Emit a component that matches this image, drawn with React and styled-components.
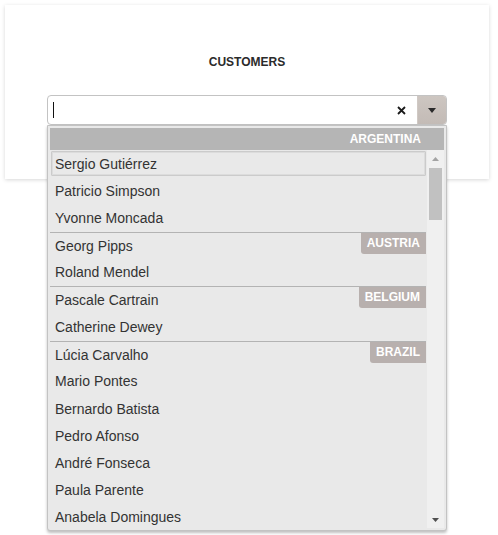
import styled, { createGlobalStyle } from "styled-components";

const GlobalStyle = createGlobalStyle`
  html, body {
    margin: 0;
    padding: 0;
    background: #ffffff;
    height: 100%;
  }
  #root {
    min-height: 100%;
  }
  body {
    font-family: "Liberation Sans", Arial, sans-serif;
    color: #333333;
  }
`;

const Page = styled.div`
  min-height: 535px;
  box-sizing: border-box;
  padding: 5px 9px 0 5px;
`;

const Card = styled.div`
  position: relative;
  z-index: 0;
  width: 484px;
  box-sizing: border-box;
  padding: 47px 42px 54px 42px;
  background: #ffffff;
  box-shadow: 0 1px 4px rgba(0, 0, 0, 0.16);
  display: flex;
  flex-direction: column;
  align-items: center;
`;

const Title = styled.div`
  font-size: 12px;
  font-weight: bold;
  line-height: 20px;
  color: #2b2b2b;
  margin-bottom: 23px;
`;

const Combo = styled.div`
  position: relative;
  width: 400px;
`;

const InputBox = styled.div`
  height: 30px;
  box-sizing: border-box;
  border: 1px solid #c3c3c3;
  border-radius: 4px;
  background: #ffffff;
  display: flex;
  align-items: stretch;
  overflow: hidden;
`;

const Field = styled.div`
  flex: 1;
  display: flex;
  align-items: center;
  padding-left: 5px;
`;

const Caret = styled.span`
  width: 1px;
  height: 16px;
  background: #111111;
`;

const Clear = styled.div`
  width: 24px;
  display: flex;
  align-items: center;
  justify-content: center;
  margin-right: 4px;
`;

const ToggleButton = styled.div`
  width: 28px;
  background: linear-gradient(#cdc6c1, #c3bbb6);
  border-left: 1px solid #d0c9c4;
  display: flex;
  align-items: center;
  justify-content: center;
`;

const Popup = styled.div`
  position: absolute;
  z-index: 10;
  top: 100%;
  left: 0;
  width: 400px;
  box-sizing: border-box;
  padding: 2px;
  border: 1px solid #c3c3c3;
  border-radius: 0 0 3px 3px;
  background: #e9e9e9;
  box-shadow: 0 2px 3px rgba(0, 0, 0, 0.25);
  display: flex;
  flex-direction: column;
`;

const Header = styled.div`
  height: 22px;
  line-height: 22px;
  background: #b5b5b5;
  color: #ffffff;
  font-size: 12px;
  font-weight: bold;
  text-align: right;
  padding-right: 23px;
`;

const Body = styled.div`
  height: 378px;
  flex-shrink: 0;
  display: flex;
`;

const List = styled.ul`
  flex: 1;
  margin: 0;
  padding: 0;
  list-style: none;
  overflow: hidden;
`;

const Item = styled.li`
  position: relative;
  height: 27.23px;
  box-sizing: border-box;
  padding-left: 5px;
  display: flex;
  align-items: center;
  font-size: 14px;
  color: #333333;
  border-top: ${(p) => (p.$group ? "1px solid #b3b3b3" : "none")};
  margin-right: 1px;
  &::after {
    content: "";
    display: ${(p) => (p.$focused ? "block" : "none")};
    position: absolute;
    left: 1px;
    right: 0;
    top: 1px;
    bottom: 1px;
    border: 1px solid #cbcbcb;
    box-shadow: inset 0 0 0 1px #dcdcdc;
    border-radius: 1px;
  }
`;

const GroupLabel = styled.span`
  position: absolute;
  top: 0;
  right: 0;
  height: 21px;
  line-height: 21px;
  padding: 0 6px;
  background: #b8b0ae;
  color: #ffffff;
  font-size: 12px;
  font-weight: bold;
  border-bottom-left-radius: 3px;
`;

const Scrollbar = styled.div`
  width: 17px;
  background: #f0f0f0;
  display: flex;
  flex-direction: column;
`;

const Arrow = styled.div`
  height: 17px;
  display: flex;
  align-items: center;
  justify-content: center;
`;

const Track = styled.div`
  flex: 1;
  padding: 1px 2px;
`;

const Thumb = styled.div`
  height: 52px;
  background: #c1c1c1;
`;

const customers = [
  { name: "Sergio Gutiérrez", country: "Argentina" },
  { name: "Patricio Simpson", country: "Argentina" },
  { name: "Yvonne Moncada", country: "Argentina" },
  { name: "Georg Pipps", country: "Austria" },
  { name: "Roland Mendel", country: "Austria" },
  { name: "Pascale Cartrain", country: "Belgium" },
  { name: "Catherine Dewey", country: "Belgium" },
  { name: "Lúcia Carvalho", country: "Brazil" },
  { name: "Mario Pontes", country: "Brazil" },
  { name: "Bernardo Batista", country: "Brazil" },
  { name: "Pedro Afonso", country: "Brazil" },
  { name: "André Fonseca", country: "Brazil" },
  { name: "Paula Parente", country: "Brazil" },
  { name: "Anabela Domingues", country: "Brazil" },
];

const Triangle = ({ up, color, w = 8, h = 4 }) => (
  <svg width={w} height={h} viewBox={`0 0 ${w} ${h}`}>
    <polygon
      points={up ? `0,${h} ${w},${h} ${w / 2},0` : `0,0 ${w},0 ${w / 2},${h}`}
      fill={color}
    />
  </svg>
);

const App = () => {
  return (
    <Page>
      <GlobalStyle />
      <Card>
        <Title>CUSTOMERS</Title>
        <Combo>
          <InputBox>
            <Field>
              <Caret />
            </Field>
            <Clear>
              <svg width="9" height="9" viewBox="0 0 9 9">
                <path d="M1 1 L8 8 M8 1 L1 8" stroke="#1a1a1a" strokeWidth="1.8" />
              </svg>
            </Clear>
            <ToggleButton>
              <Triangle color="#2a2a2a" w={8} h={5} />
            </ToggleButton>
          </InputBox>
          <Popup>
            <Header>ARGENTINA</Header>
            <Body>
              <List>
                {customers.map((c, i) => {
                  const group = i > 0 && customers[i - 1].country !== c.country;
                  return (
                    <Item key={c.name} $group={group} $focused={i === 0}>
                      {c.name}
                      {group && <GroupLabel>{c.country.toUpperCase()}</GroupLabel>}
                    </Item>
                  );
                })}
              </List>
              <Scrollbar>
                <Arrow>
                  <Triangle up color="#a3a3a3" w={7} h={4} />
                </Arrow>
                <Track>
                  <Thumb />
                </Track>
                <Arrow>
                  <Triangle color="#505050" w={7} h={4} />
                </Arrow>
              </Scrollbar>
            </Body>
          </Popup>
        </Combo>
      </Card>
    </Page>
  );
};

export default App;
